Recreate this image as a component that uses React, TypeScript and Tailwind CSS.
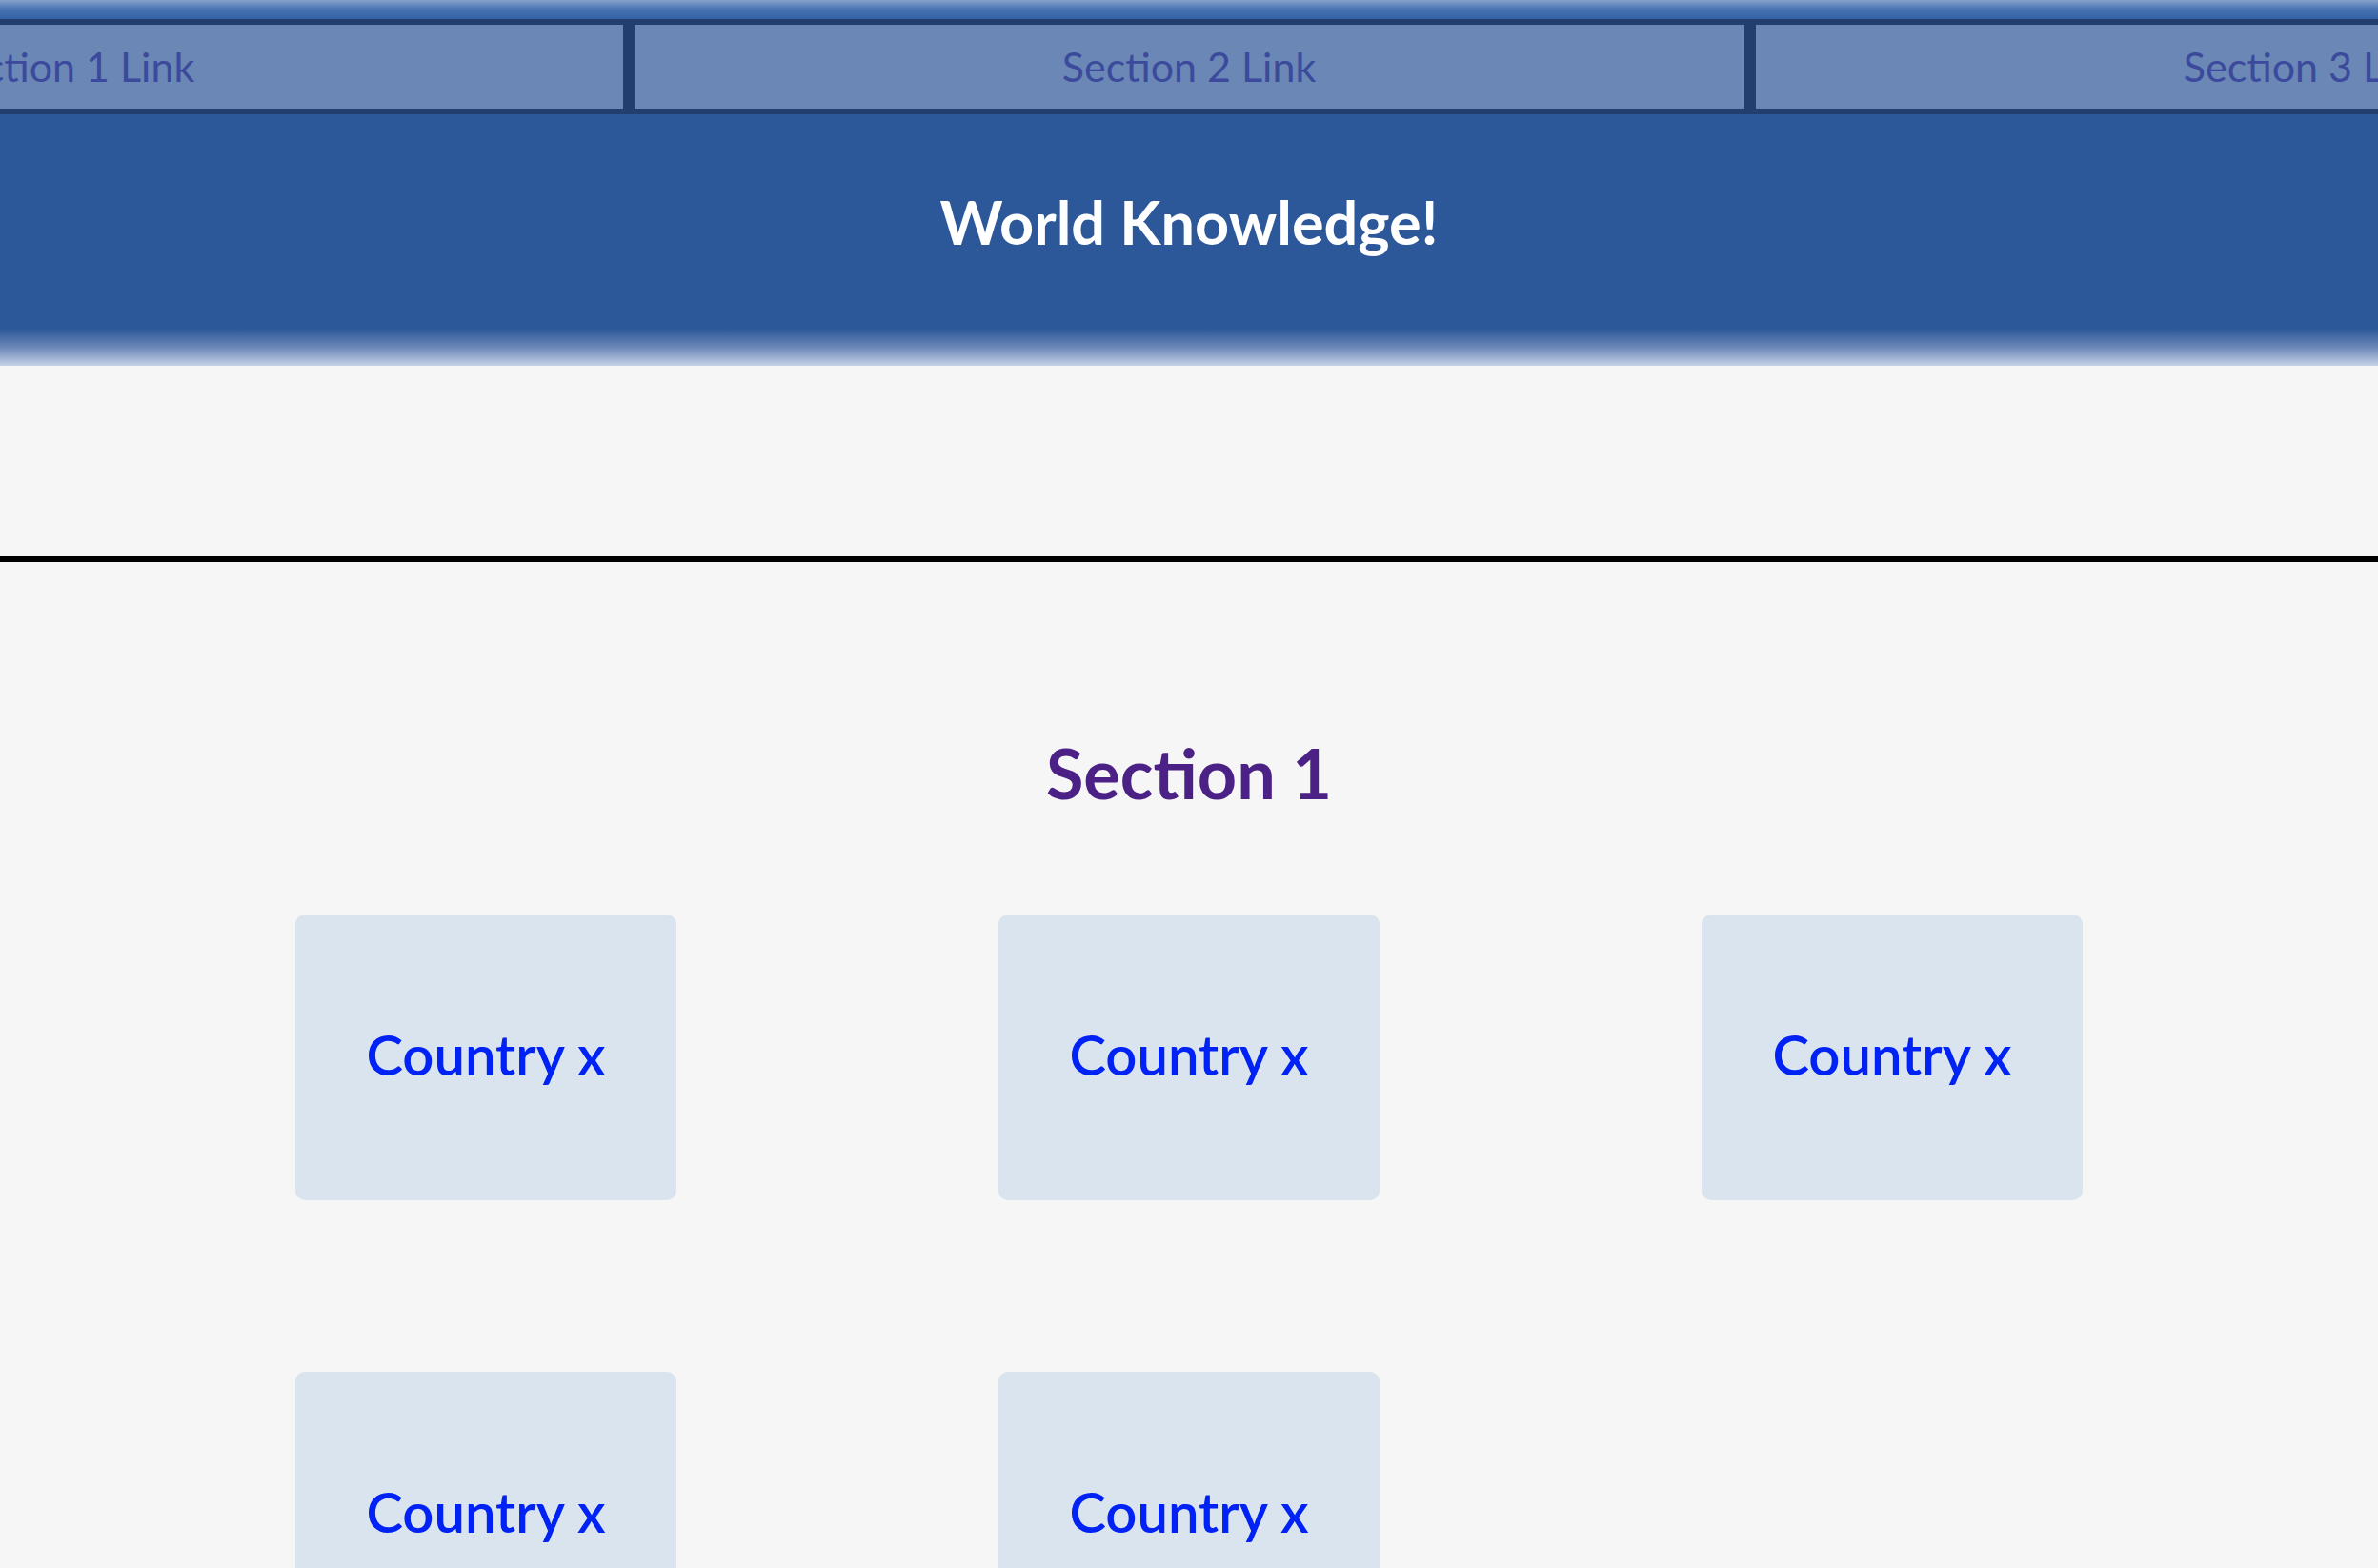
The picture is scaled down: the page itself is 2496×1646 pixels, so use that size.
import React from "react";

const font = { fontFamily: "Lato, 'Noto Sans', sans-serif" };

function NavItem({ label }: { label: string }) {
  return (
    <div className="w-[1177px] shrink-0 h-[100px] border-[6px] border-[#213e6e] bg-[#6a87b5] flex items-center justify-center">
      <a className="text-[43px] leading-[1.2] text-[#3b4a9c]">{label}</a>
    </div>
  );
}

function Card() {
  return (
    <div className="w-[400px] h-[300px] rounded-[10px] bg-[#dae4ef] flex items-center justify-center pb-[8px]">
      <a className="text-[58px] leading-[1.2] text-[#0022f5] font-semibold">Country x</a>
    </div>
  );
}

export default function App() {
  return (
    <div className="min-h-screen bg-[#f6f6f6] overflow-hidden" style={font}>
      <header>
        <div className="h-[20px] bg-gradient-to-b from-[#87a0cb] via-[#4672b0] to-[#3462a5]" />
        <nav className="flex justify-center overflow-hidden bg-[#2c5899]">
          <NavItem label="Section 1 Link" />
          <NavItem label="Section 2 Link" />
          <NavItem label="Section 3 Link" />
        </nav>
        <div className="h-[225px] bg-[#2c5899] flex items-center justify-center">
          <h1 className="text-[63px] leading-[1.2] font-bold text-white">World Knowledge!</h1>
        </div>
        <div className="h-[39px] bg-gradient-to-b from-[#2c5899] via-[#6b87b8] to-[#c6d2e6]" />
      </header>
      <div className="h-[200px]" />
      <div className="h-[6px] bg-black" />
      <main className="pt-[178px]">
        <h2 className="text-center text-[72px] leading-[1.2] font-bold text-[#4b2185]">Section 1</h2>
        <div className="mt-[106px] px-[141px] grid grid-cols-3 gap-y-[180px] justify-items-center">
          <Card />
          <Card />
          <Card />
          <Card />
          <Card />
        </div>
      </main>
    </div>
  );
}
